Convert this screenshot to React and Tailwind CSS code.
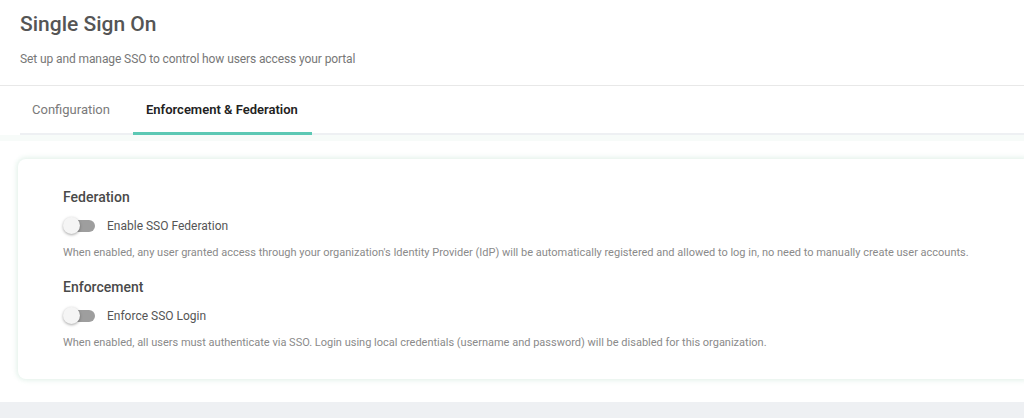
import React from 'react';

const Toggle = () => (
  <div className="relative w-[32px] h-[16px] flex items-center shrink-0">
    <div className="w-[30px] h-[12px] ml-[2px] rounded-full bg-[#9e9e9e]" />
    <div className="absolute left-0 top-0 w-[17px] h-[17px] -mt-[1px] rounded-full bg-[#f5f5f5] shadow-[0_1px_3px_rgba(0,0,0,0.35)]" />
  </div>
);

const Section = ({ title, label, text }) => (
  <div>
    <h3 className="text-[14px] font-medium text-[#4a4a4a] leading-[20px]">{title}</h3>
    <div className="flex items-center gap-[12px] mt-[10px]">
      <Toggle />
      <span className="text-[12px] text-[#555]">{label}</span>
    </div>
    <p className="text-[11px] text-[#8a8a8a] mt-[10px] leading-[16px]">{text}</p>
  </div>
);

export default function App() {
  return (
    <div className="w-[1024px] h-[418px] bg-white flex flex-col overflow-hidden" style={{ fontFamily: 'Roboto, "Liberation Sans", sans-serif' }}>
      <div className="h-[86px] border-b border-[#e8e8e8] px-[20px] pt-[10px] shrink-0">
        <h1 className="text-[21px] font-medium text-[#555] leading-[28px]">Single Sign On</h1>
        <p className="text-[12px] text-[#777] mt-[12px] tracking-[-0.1px]">Set up and manage SSO to control how users access your portal</p>
      </div>
      <div className="pl-[20px] shrink-0">
        <div className="flex h-[49px] border-b-2 border-[#eef0f3]">
          <div className="px-[12px] flex items-center text-[13px] text-[#7a7a7a]">Configuration</div>
          <div className="ml-[11px] px-[13px] flex items-center text-[13px] font-semibold text-[#222] border-b-[3px] border-[#5cc8b4] -mb-[2px] pt-[2px] w-[179px]">Enforcement &amp; Federation</div>
        </div>
      </div>
      <div className="h-[6px] bg-[#f7fbf9] shrink-0" />
      <div className="flex-1 pl-[18px] pt-[18px]">
        <div className="h-[220px] rounded-l-[8px] bg-white shadow-[0_0_4px_2px_rgba(225,240,232,0.8)] pl-[45px] pt-[28px] flex flex-col gap-[16px]">
          <Section
            title="Federation"
            label="Enable SSO Federation"
            text="When enabled, any user granted access through your organization's Identity Provider (IdP) will be automatically registered and allowed to log in, no need to manually create user accounts."
          />
          <Section
            title="Enforcement"
            label="Enforce SSO Login"
            text="When enabled, all users must authenticate via SSO. Login using local credentials (username and password) will be disabled for this organization."
          />
        </div>
      </div>
      <div className="h-[16px] bg-[#eef0f3] shrink-0" />
    </div>
  );
}
